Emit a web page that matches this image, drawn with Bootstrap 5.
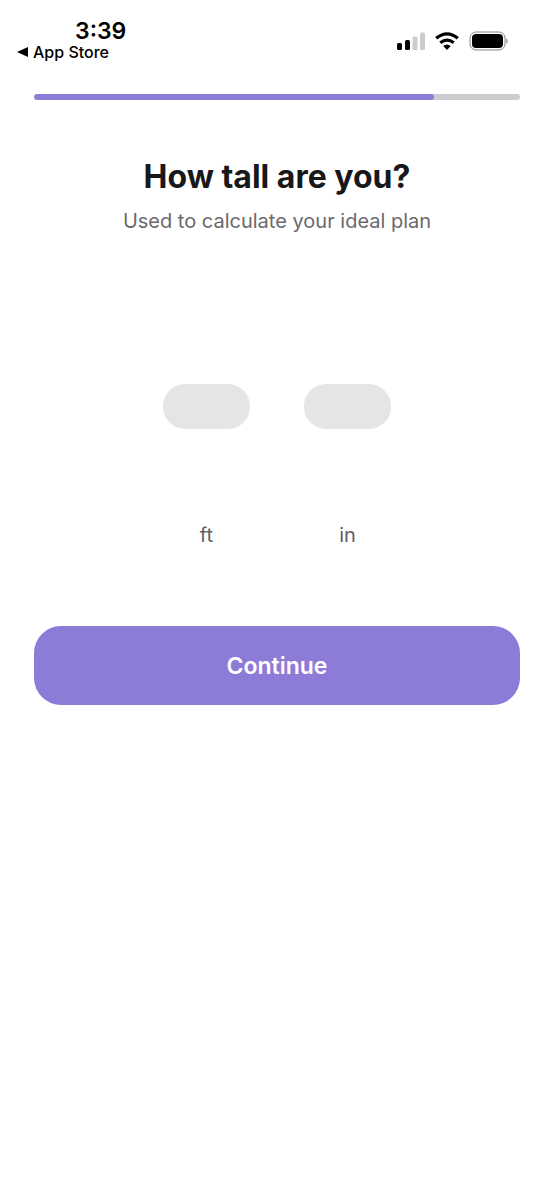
<!DOCTYPE html>
<html lang="en">
<head>
<meta charset="utf-8">
<meta name="viewport" content="width=device-width, initial-scale=1">
<title>How tall are you?</title>
<link href="https://cdn.jsdelivr.net/npm/bootstrap@5.3.0/dist/css/bootstrap.min.css" rel="stylesheet">
<style>
  body { font-family: Inter, sans-serif; color: #18181a; background: #fff; }
  .status-bar { height: 94px; padding: 19px 46px 0 17px; }
  .clock { font-size: 23px; line-height: 24px; font-weight: 600; padding-left: 58px; color: #000; }
  .back-link { font-size: 16px; line-height: 18px; font-weight: 500; color: #000; gap: 5px; }
  .status-icons { padding-top: 12px; }
  .screen { padding: 0 34px; }
  .progress { --bs-progress-height: 6px; --bs-progress-bg: #cdcdd1; --bs-progress-bar-bg: #8c7cd8; --bs-progress-border-radius: 3px; }
  .progress-bar { border-radius: 3px; }
  .title { font-size: 32px; line-height: 40px; font-weight: 700; margin-top: 57px; }
  .subtitle { font-size: 20px; line-height: 28px; color: #6a6a6c; margin-top: 10px; }
  .pickers { gap: 54px; margin-top: 149px; }
  .picker { width: 87px; gap: 92px; }
  .wheel { height: 45px; border: 0; border-radius: 22px; background: #e5e5e7; }
  .unit { font-size: 20px; line-height: 28px; color: #606062; }
  .btn-continue { --bs-btn-color: #fff; --bs-btn-bg: #8c7cd8; --bs-btn-hover-color: #fff; --bs-btn-hover-bg: #7c6bcb; --bs-btn-border-width: 0; --bs-btn-border-radius: 27px; font-size: 23px; line-height: 32px; font-weight: 600; padding: 24px 12px 23px; margin-top: 77px; }
</style>
</head>
<body>
<header class="status-bar d-flex justify-content-between align-items-start">
  <div>
    <div class="clock">3:39</div>
    <a href="#" class="back-link d-flex align-items-center text-decoration-none">
      <svg width="11" height="10" viewBox="0 0 11 10" aria-hidden="true"><path d="M11 0v10L0 5z"/></svg>App Store</a>
  </div>
  <div class="status-icons d-flex align-items-center">
    <svg width="111" height="20" viewBox="397 31 111 20" role="img" aria-label="Signal, Wi-Fi and battery">
      <rect x="397" y="43" width="5" height="7" rx="1.5"/>
      <rect x="405" y="40" width="5" height="10" rx="1.5"/>
      <rect x="412.5" y="36.500" width="5" height="13.500" rx="1.5" fill="#ccc"/>
      <rect x="420" y="32.5" width="5" height="17.5" rx="1.5" fill="#ccc"/>
      <g fill="none" stroke="#000" stroke-width="3.2"><path d="M436.2 38.2q10.8-8.800 21.600 0"/><path d="M440.300 42.800q6.700-5.400 13.400 0"/></g>
      <path d="M447 50l-3.800-3.900q3.800-3 7.600 0z"/>
      <rect x="470" y="32" width="35" height="18" rx="6" fill="none" stroke="#858585"/>
      <rect x="472" y="34" width="31" height="14" rx="4"/>
      <path d="M506.300 38q2.800 3 0 6z" fill="#858585"/>
    </svg>
  </div>
</header>
<main class="screen text-center">
  <div class="progress" role="progressbar" aria-label="Setup progress" aria-valuenow="82" aria-valuemin="0" aria-valuemax="100"><div class="progress-bar" style="width:82.4%"></div></div>
  <h1 class="title mb-0">How tall are you?</h1>
  <p class="subtitle mb-0">Used to calculate your ideal plan</p>
  <div class="pickers d-flex justify-content-center">
    <div class="picker d-flex flex-column"><input class="wheel w-100" id="feet" type="text" inputmode="numeric"><label class="unit" for="feet">ft</label></div>
    <div class="picker d-flex flex-column"><input class="wheel w-100" id="inches" type="text" inputmode="numeric"><label class="unit" for="inches">in</label></div>
  </div>
  <button type="button" class="btn btn-continue w-100">Continue</button>
</main>
<script src="https://cdn.jsdelivr.net/npm/bootstrap@5.3.0/dist/js/bootstrap.bundle.min.js"></script>
</body>
</html>
